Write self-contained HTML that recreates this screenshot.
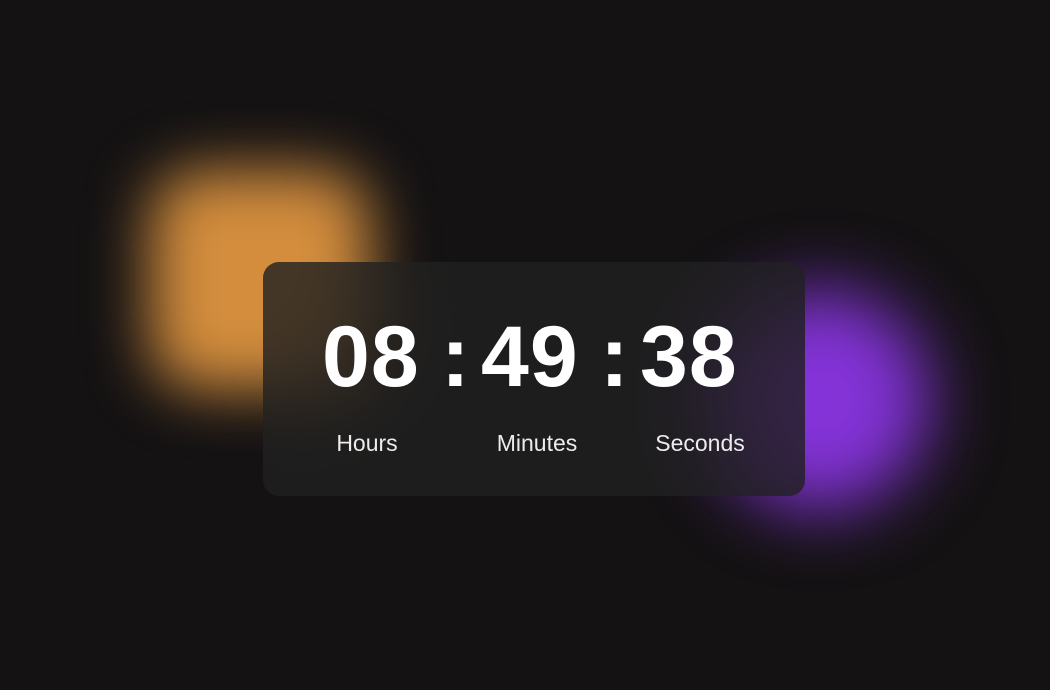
<!DOCTYPE html>
<html><head><style>
html,body{margin:0;width:1050px;height:690px;overflow:hidden;background:#141213;font-family:"Liberation Sans",sans-serif}
.o{position:absolute;left:150px;top:170px;width:220px;height:220px;border-radius:50px;background:#d38d3d;filter:blur(30px)}
.p{position:absolute;left:710px;top:290px;width:220px;height:220px;border-radius:50%;background:#8433d8;filter:blur(35px)}
.card{position:absolute;left:263px;top:262px;width:542px;height:234px;border-radius:16px;background:rgba(32,32,33,0.8);backdrop-filter:blur(30px);-webkit-backdrop-filter:blur(30px)}
.d{position:absolute;top:309px;color:#fff;font-weight:bold;font-size:86px;line-height:96px;letter-spacing:1px}
.l{position:absolute;top:429px;color:#ececec;font-size:23px;line-height:28px;transform:translateX(-50%)}
</style></head><body>
<div class="o"></div><div class="p"></div>
<div class="card"></div>
<div class="d" style="left:322px">08</div>
<div class="d" style="left:441px">:</div>
<div class="d" style="left:481px">49</div>
<div class="d" style="left:600px">:</div>
<div class="d" style="left:640px">38</div>
<div class="l" style="left:367px">Hours</div>
<div class="l" style="left:537px">Minutes</div>
<div class="l" style="left:700px">Seconds</div>
</body></html>
